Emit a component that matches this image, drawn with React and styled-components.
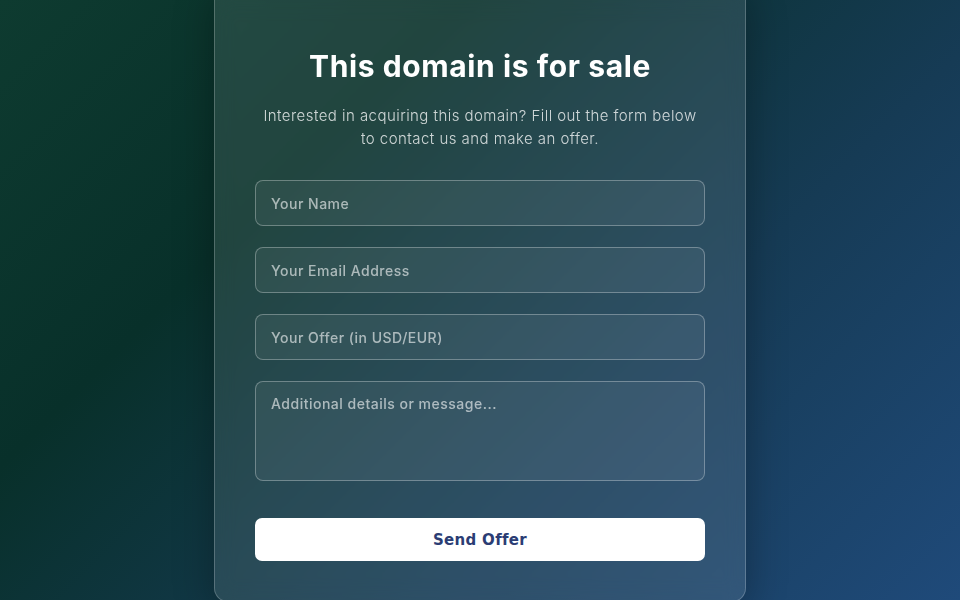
import React from 'react';
import styled, { createGlobalStyle } from 'styled-components';

const GlobalStyle = createGlobalStyle`
  * {
    box-sizing: border-box;
  }

  body {
    margin: 0;
    font-family: 'Inter', 'Noto Sans', sans-serif;
    background: linear-gradient(135deg, #0e3b30 0%, #08302a 30%, #163b55 65%, #1f4a7a 100%);
    min-height: 100vh;
  }
`;

const Page = styled.div`
  height: 100vh;
  display: flex;
  align-items: flex-end;
  justify-content: center;
  overflow: hidden;
`;

const Card = styled.div`
  width: 532px;
  flex-shrink: 0;
  margin-bottom: -2px;
  padding: 54px 40px 40px;
  background: rgba(255, 255, 255, 0.1);
  border: 1px solid rgba(255, 255, 255, 0.22);
  border-radius: 14px;
  box-shadow: 0 8px 40px rgba(0, 0, 0, 0.3);
  backdrop-filter: blur(10px);
  text-align: center;
`;

const Title = styled.h1`
  margin: 0;
  height: 52px;
  line-height: 52px;
  font-size: 30px;
  font-weight: 700;
  color: #ffffff;
  letter-spacing: 0.6px;
`;

const Intro = styled.p`
  margin: 12px 0 30px;
  font-size: 15px;
  font-weight: 300;
  line-height: 23px;
  letter-spacing: 0.45px;
  color: rgba(255, 255, 255, 0.78);
`;

const Form = styled.form`
  display: flex;
  flex-direction: column;
  gap: 21px;
`;

const Field = styled.input`
  width: 100%;
  height: 46px;
  padding: 0 15px;
  font-family: inherit;
  font-size: 14px;
  font-weight: 500;
  letter-spacing: 0.5px;
  color: #ffffff;
  background: rgba(255, 255, 255, 0.06);
  border: 1px solid rgba(255, 255, 255, 0.3);
  border-radius: 8px;
  outline: none;

  &::placeholder {
    color: rgba(255, 255, 255, 0.6);
  }
`;

const Message = styled.textarea`
  display: block;
  width: 100%;
  height: 100px;
  padding: 12px 15px;
  font-family: inherit;
  font-size: 14px;
  font-weight: 500;
  letter-spacing: 0.5px;
  line-height: 20px;
  color: #ffffff;
  background: rgba(255, 255, 255, 0.06);
  border: 1px solid rgba(255, 255, 255, 0.3);
  border-radius: 8px;
  resize: none;
  outline: none;

  &::placeholder {
    color: rgba(255, 255, 255, 0.6);
  }
`;

const SendButton = styled.button`
  margin-top: 16px;
  height: 43px;
  width: 100%;
  font-family: 'DejaVu Sans', sans-serif;
  font-size: 15px;
  font-weight: 700;
  letter-spacing: 0.3px;
  color: #2b3d74;
  background: #ffffff;
  border: none;
  border-radius: 7px;
  cursor: pointer;
`;

export default function App() {
  return (
    <>
      <GlobalStyle />
      <Page>
        <Card>
          <Title>This domain is for sale</Title>
          <Intro>
            Interested in acquiring this domain? Fill out the form below
            <br />
            to contact us and make an offer.
          </Intro>
          <Form onSubmit={(e) => e.preventDefault()}>
            <Field type="text" placeholder="Your Name" />
            <Field type="email" placeholder="Your Email Address" />
            <Field type="text" placeholder="Your Offer (in USD/EUR)" />
            <Message placeholder="Additional details or message..." />
            <SendButton type="submit">Send Offer</SendButton>
          </Form>
        </Card>
      </Page>
    </>
  );
}
